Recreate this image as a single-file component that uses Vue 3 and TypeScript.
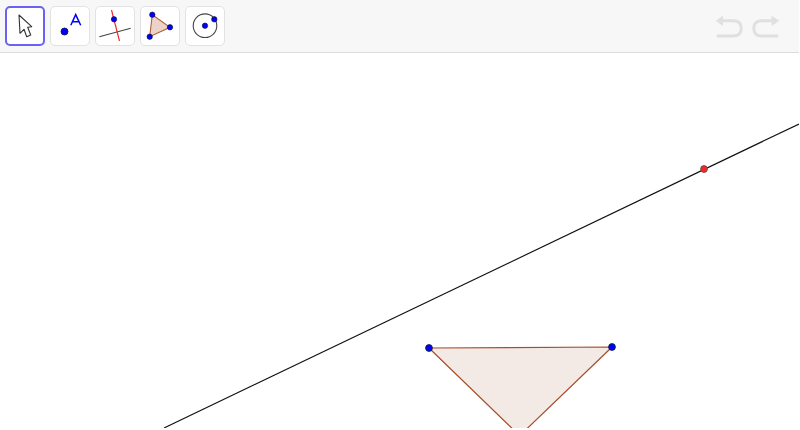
<script setup lang="ts">
const tools = ["move", "point", "line", "polygon", "circle"];
</script>

<template>
  <div class="applet">
    <header class="toolbar">
      <div class="tools">
        <button v-for="(tool, index) in tools" :key="tool" :class="['tool', { active: index === 0 }]">
          <svg v-if="tool === 'move'" width="24" height="24" viewBox="0 0 24 24">
            <path d="M6 1 L7 19.3 L11 15.3 L13.7 22.7 L17.7 21 L14.7 13.3 L18.7 12.7 Z" fill="#fff" stroke="#333" stroke-width="1.1" stroke-linejoin="round" />
          </svg>
          <svg v-else-if="tool === 'point'" width="32" height="32" viewBox="0 0 32 32">
            <circle cx="10.5" cy="21.5" r="3.5" fill="#00f" stroke="#113" stroke-width="0.8" />
            <path d="M16.8 15.2 L21.7 4.6 L26.7 15.2 M18.5 11.8 H25" fill="none" stroke="#00f" stroke-width="1.5" />
          </svg>
          <svg v-else-if="tool === 'line'" width="36" height="36" viewBox="0 0 36 36">
            <line x1="2.3" y1="28.7" x2="33.7" y2="20.3" stroke="#444" stroke-width="1.1" />
            <line x1="14.5" y1="2" x2="22.5" y2="33" stroke="#e22" stroke-width="1.1" />
            <circle cx="17" cy="11.3" r="2.7" fill="#00f" stroke="#113" stroke-width="0.6" />
          </svg>
          <svg v-else-if="tool === 'polygon'" width="36" height="36" viewBox="0 0 36 36">
            <path d="M10.3 6.7 L28 19.3 L7.7 28.7 Z" fill="#ebd3c8" stroke="#b4603a" stroke-width="1.1" />
            <circle cx="10.3" cy="6.7" r="2.7" fill="#00f" stroke="#113" stroke-width="0.6" />
            <circle cx="28" cy="19.3" r="2.7" fill="#00f" stroke="#113" stroke-width="0.6" />
            <circle cx="7.7" cy="28.7" r="2.7" fill="#00f" stroke="#113" stroke-width="0.6" />
          </svg>
          <svg v-else width="36" height="36" viewBox="0 0 36 36">
            <circle cx="18" cy="17.7" r="11.8" fill="none" stroke="#444" stroke-width="1.1" />
            <circle cx="18" cy="17.7" r="2.7" fill="#00f" stroke="#113" stroke-width="0.6" />
            <circle cx="27.3" cy="11.3" r="2.7" fill="#00f" stroke="#113" stroke-width="0.6" />
          </svg>
        </button>
      </div>
      <div class="history">
        <svg width="30" height="26" viewBox="0 0 30 26">
          <path d="M6 7.7 H18.5 C24 7.7 26.2 11 26.2 15.3 C26.2 20 24 23 18.5 23 H1.7" fill="none" stroke="#e0e0e0" stroke-width="3" />
          <path d="M8 2.7 L0.7 7.7 L8 13 Z" fill="#e0e0e0" />
        </svg>
        <svg width="30" height="26" viewBox="0 0 30 26">
          <path d="M24 7.7 H11.5 C6 7.7 3.8 11 3.8 15.3 C3.8 20 6 23 11.5 23 H28.3" fill="none" stroke="#e0e0e0" stroke-width="3" />
          <path d="M21.6 2.7 L29.3 7.7 L21.6 13 Z" fill="#e0e0e0" />
        </svg>
      </div>
    </header>
    <svg class="canvas" width="799" height="375" viewBox="0 53 799 375">
      <line x1="164" y1="428" x2="799" y2="124" stroke="#111" stroke-width="1.15" />
      <path d="M429 348 L612 347 L519.7 435.7 Z" fill="#f4eae5" stroke="#a5502d" stroke-width="1.2" />
      <circle cx="429" cy="348" r="3.4" fill="#00f" stroke="#124" stroke-width="0.9" />
      <circle cx="612" cy="347" r="3.4" fill="#00f" stroke="#124" stroke-width="0.9" />
      <circle cx="704" cy="169" r="3.4" fill="#f22" stroke="#555" stroke-width="0.9" />
    </svg>
  </div>
</template>

<style scoped>
.applet {
  width: 799px;
  height: 428px;
  overflow: hidden;
  background: #fff;
}

.toolbar {
  display: flex;
  justify-content: space-between;
  align-items: center;
  box-sizing: border-box;
  height: 53px;
  padding: 0 5px;
  background: #f7f7f7;
  border-bottom: 1px solid #dcdcdc;
}

.tools {
  display: flex;
  gap: 5px;
}

.tool {
  display: flex;
  align-items: center;
  justify-content: center;
  box-sizing: border-box;
  width: 40px;
  height: 40px;
  padding: 0;
  overflow: hidden;
  background: #fff;
  border: 1px solid #e2e2e2;
  border-radius: 5px;
}

.tool.active {
  border: 2px solid #6a62f5;
}

.history {
  display: flex;
  gap: 5px;
  padding-right: 14px;
}

.canvas {
  display: block;
}
</style>
